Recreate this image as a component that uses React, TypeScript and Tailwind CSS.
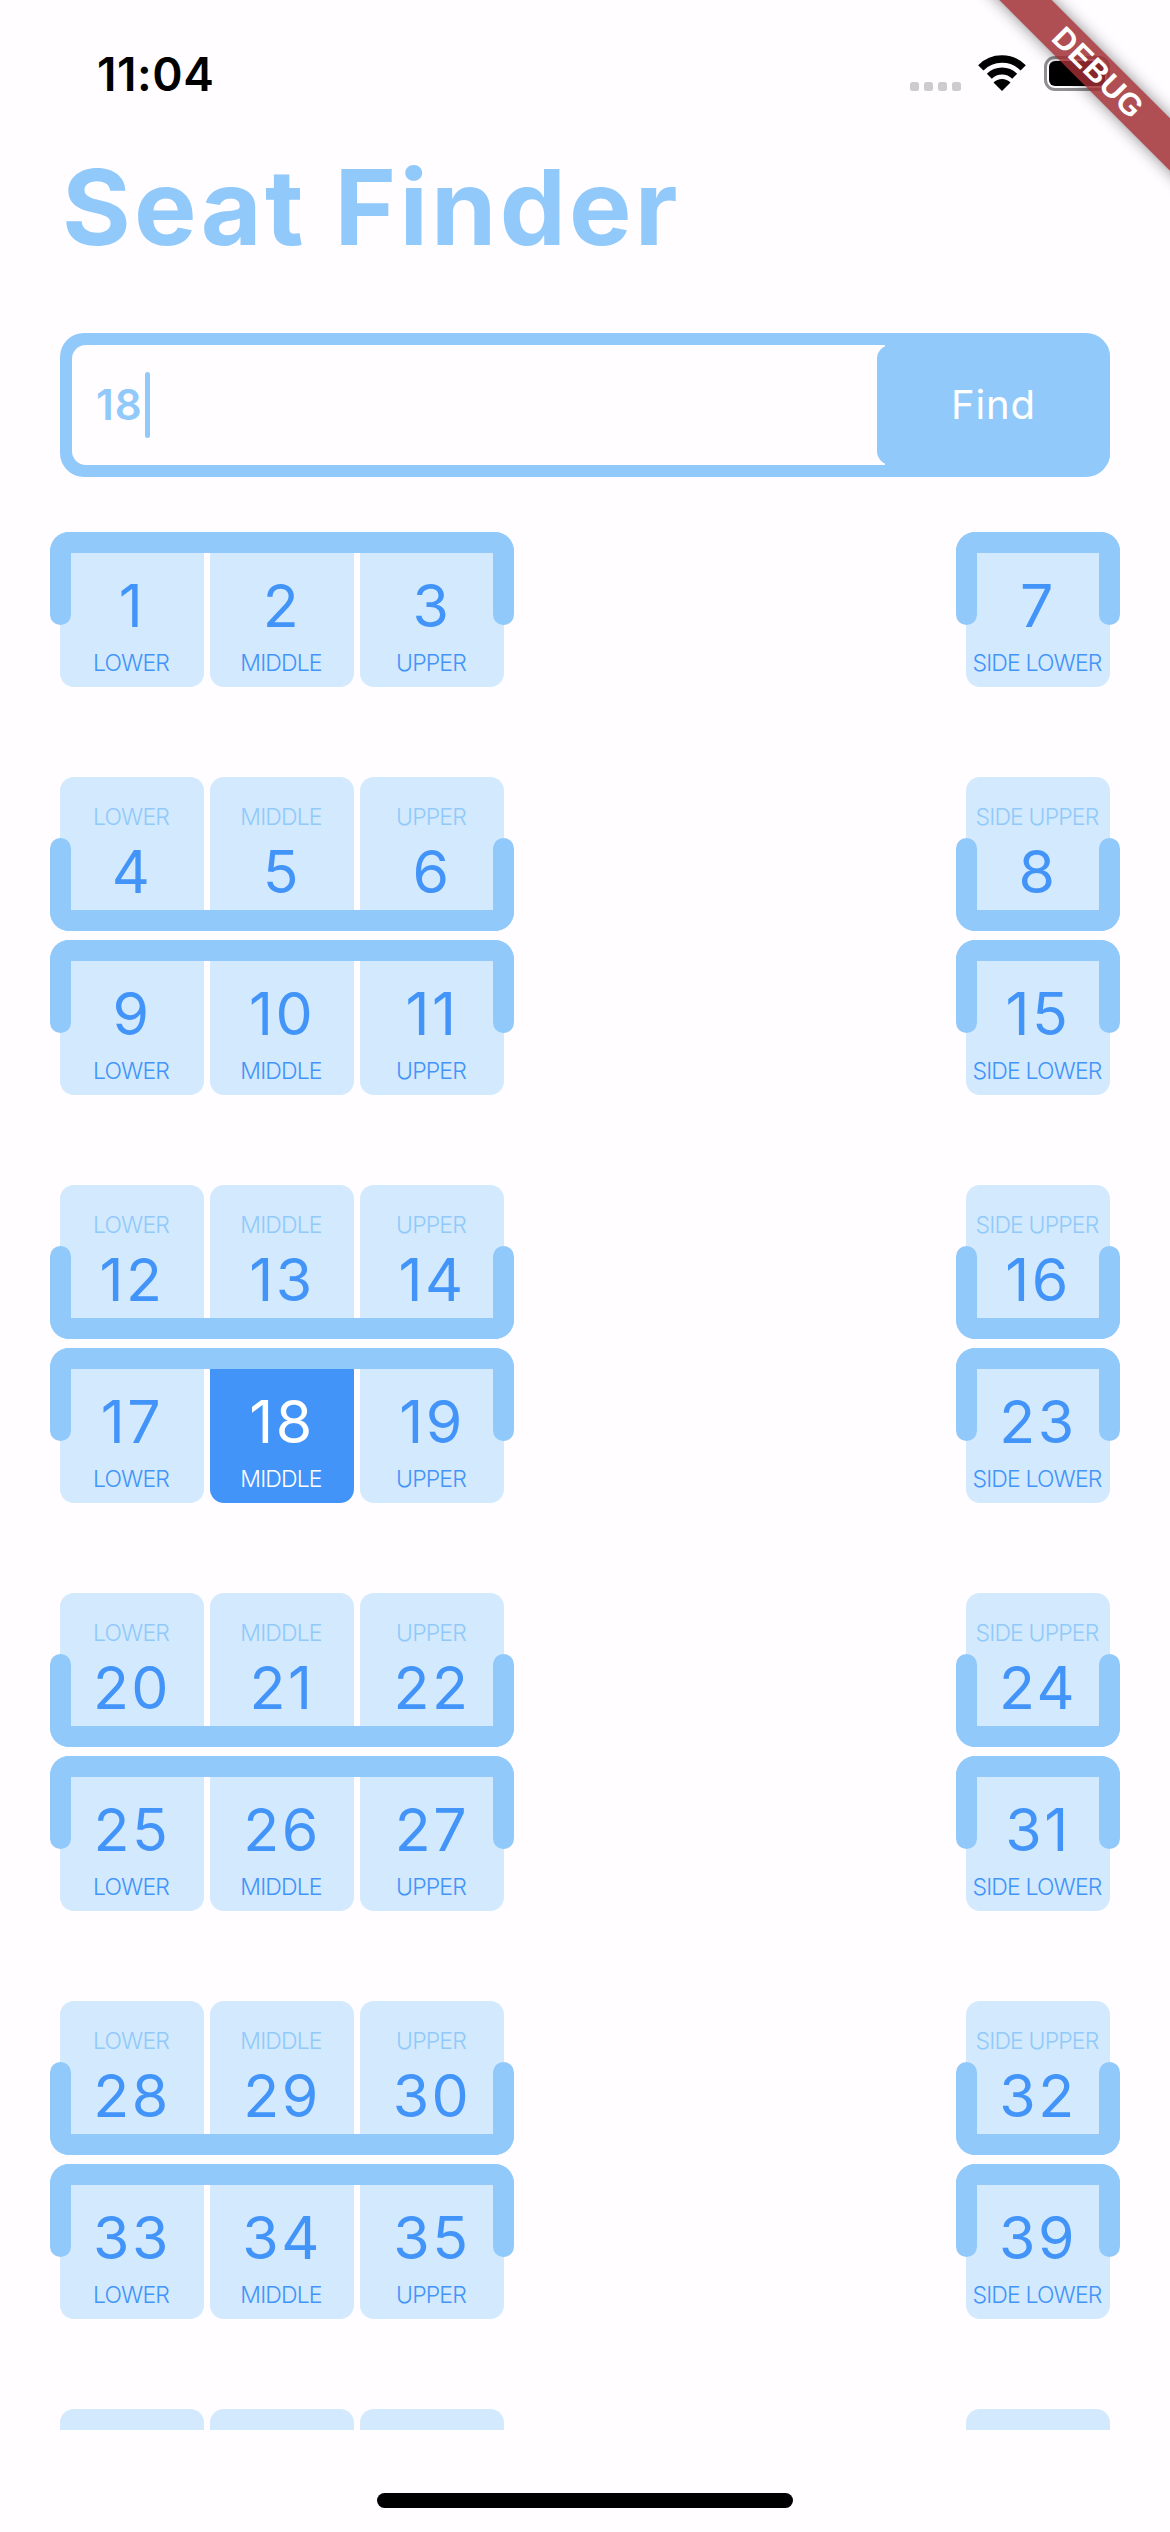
import React from "react";

const FRAME = "bg-[#91c9fa]";

function Bracket({ pos }: { pos: "top" | "bottom" }) {
  const isTop = pos === "top";
  return (
    <div
      className={`absolute -left-[10px] -right-[10px] h-[93px] ${isTop ? "top-0" : "bottom-0"}`}
    >
      <div
        className={`absolute inset-x-0 h-[21px] ${FRAME} ${isTop ? "top-0 rounded-t-[20px]" : "bottom-0 rounded-b-[20px]"}`}
      />
      <div
        className={`absolute left-0 top-0 bottom-0 w-[21px] ${FRAME} ${isTop ? "rounded-tl-[20px] rounded-b-[11px]" : "rounded-bl-[20px] rounded-t-[11px]"}`}
      />
      <div
        className={`absolute right-0 top-0 bottom-0 w-[21px] ${FRAME} ${isTop ? "rounded-tr-[20px] rounded-b-[11px]" : "rounded-br-[20px] rounded-t-[11px]"}`}
      />
    </div>
  );
}

function Seat({ n, label, pos, active }: { n: number; label: string; pos: "top" | "bottom"; active?: boolean }) {
  const bg = active ? "bg-[#4394f9]" : "bg-[#d2e9fe]";
  const numColor = active ? "text-white" : "text-[#4394f9]";
  const num = (
    <div className={`h-[58px] leading-[58px] text-[59px] font-normal tracking-[2.5px] ${numColor}`}>{n}</div>
  );
  return (
    <div className={`w-[144px] h-[154.5px] rounded-[14px] flex flex-col items-center ${bg} ${pos === "top" ? "pt-[45px]" : "pt-[26px]"}`}>
      {pos === "top" ? (
        <>
          {num}
          <div className={`-ml-[2px] mt-[14px] h-[28px] leading-[28px] text-[23px] font-light tracking-[-0.85px] whitespace-nowrap ${numColor}`}>{label}</div>
        </>
      ) : (
        <>
          <div className="-ml-[2px] h-[28px] leading-[28px] text-[23px] font-light tracking-[-0.85px] whitespace-nowrap text-[#91c9fa]">{label}</div>
          <div className="mt-[12px]">{num}</div>
        </>
      )}
    </div>
  );
}

function Row({ nums, side, pos, active }: { nums: number[]; side: number; pos: "top" | "bottom"; active?: number }) {
  const labels = ["LOWER", "MIDDLE", "UPPER"];
  return (
    <div className="flex justify-between">
      <div className="relative flex gap-[6px]">
        {nums.map((n, i) => (
          <Seat key={n} n={n} label={labels[i]} pos={pos} active={n === active} />
        ))}
        <Bracket pos={pos} />
      </div>
      <div className="relative">
        <Seat n={side} label={pos === "top" ? "SIDE LOWER" : "SIDE UPPER"} pos={pos} />
        <Bracket pos={pos} />
      </div>
    </div>
  );
}

function Wifi() {
  return (
    <svg width="48" height="36" viewBox="0 0 48 36" fill="none">
      <path d="M2.8 12.8 A30 30 0 0 1 45.2 12.8" stroke="#000" strokeWidth="7.5" />
      <path d="M11.3 21.3 A18 18 0 0 1 36.7 21.3" stroke="#000" strokeWidth="7" />
      <path d="M24 36 L15.5 27.5 A12 12 0 0 1 32.5 27.5 Z" fill="#000" />
    </svg>
  );
}

export default function App() {
  return (
    <div className="relative w-[1170px] h-[2532px] overflow-hidden bg-[#fffdff] [font-family:Inter,sans-serif]">
      {/* status bar */}
      <div className="h-[146px] pt-[48px] pl-[97px] pr-[60px] flex justify-between items-start">
        <div className="text-[46px] leading-[52px] font-semibold text-black tracking-[0.6px]">11:04</div>
        <div className="flex items-end h-[36px] mt-[7px]">
          <div className="flex gap-[5px] mb-0">
            {[0, 1, 2, 3].map((i) => (
              <div key={i} className="w-[9px] h-[9px] rounded-[2.5px] bg-[#cccccc]" />
            ))}
          </div>
          <div className="ml-[17px]">
            <Wifi />
          </div>
          <div className="ml-[18px] w-[66px] h-[35px] rounded-[11px] border-[3px] border-[#8f8f8f] p-[2px]">
            <div className="w-full h-full rounded-[6px] bg-black" />
          </div>
        </div>
      </div>

      {/* title */}
      <h1 className="h-[122px] pl-[62px] text-[105px] leading-[122px] font-bold text-[#91c9fa] tracking-[3.2px]">Seat Finder</h1>

      {/* search */}
      <div className="mt-[65px] mx-[60px] h-[144px] rounded-[24px] bg-[#91c9fa] p-[12px] pr-0 flex overflow-hidden">
        <div className="flex-1 bg-[#fffdff] rounded-l-[14px] pl-[24px] flex items-center">
          <span className="text-[42px] leading-[48px] font-semibold text-[#91c9fa] tracking-[1px]">18</span>
          <span className="ml-[2px] w-[5px] h-[66px] rounded-full bg-[#91c9fa]" />
        </div>
        <div className="w-[233px] -ml-[8px] bg-[#91c9fa] rounded-l-[14px] flex items-center justify-center">
          <span className="text-[40px] leading-[48px] text-white tracking-[0.9px]">Find</span>
        </div>
      </div>

      {/* seats */}
      <div className="mt-[55px] h-[1898px] overflow-hidden px-[60px]">
        <Row nums={[1, 2, 3]} side={7} pos="top" />
        <div className="mt-[90px]" />
        {[
          [[4, 5, 6, 8], [9, 10, 11, 15]],
          [[12, 13, 14, 16], [17, 18, 19, 23]],
          [[20, 21, 22, 24], [25, 26, 27, 31]],
          [[28, 29, 30, 32], [33, 34, 35, 39]],
        ].map(([u, l], i) => (
          <div key={i} className="mb-[90px]">
            <Row nums={u.slice(0, 3)} side={u[3]} pos="bottom" />
            <div className="mt-[9px]">
              <Row nums={l.slice(0, 3)} side={l[3]} pos="top" active={18} />
            </div>
          </div>
        ))}
        {/* next bay, its text lies below the fold */}
        <div className="flex justify-between">
          <div className="flex gap-[6px]">
            <div className="w-[144px] h-[154.5px] rounded-[14px] bg-[#d2e9fe]" />
            <div className="w-[144px] h-[154.5px] rounded-[14px] bg-[#d2e9fe]" />
            <div className="w-[144px] h-[154.5px] rounded-[14px] bg-[#d2e9fe]" />
          </div>
          <div className="w-[144px] h-[154.5px] rounded-[14px] bg-[#d2e9fe]" />
        </div>
      </div>

      {/* home indicator */}
      <div className="mt-[63px] mx-auto w-[416px] h-[15px] rounded-full bg-black" />

      {/* debug banner */}
      <div className="absolute left-[898px] top-[54px] w-[400px] h-[37px] rotate-45 bg-[rgba(160,45,50,0.84)] shadow-[0_0_16px_rgba(0,0,0,0.45)] flex items-center justify-center">
        <span className="text-[31px] leading-[36px] font-bold text-white tracking-[0.5px] [font-family:'Liberation_Sans',sans-serif]">DEBUG</span>
      </div>
    </div>
  );
}
